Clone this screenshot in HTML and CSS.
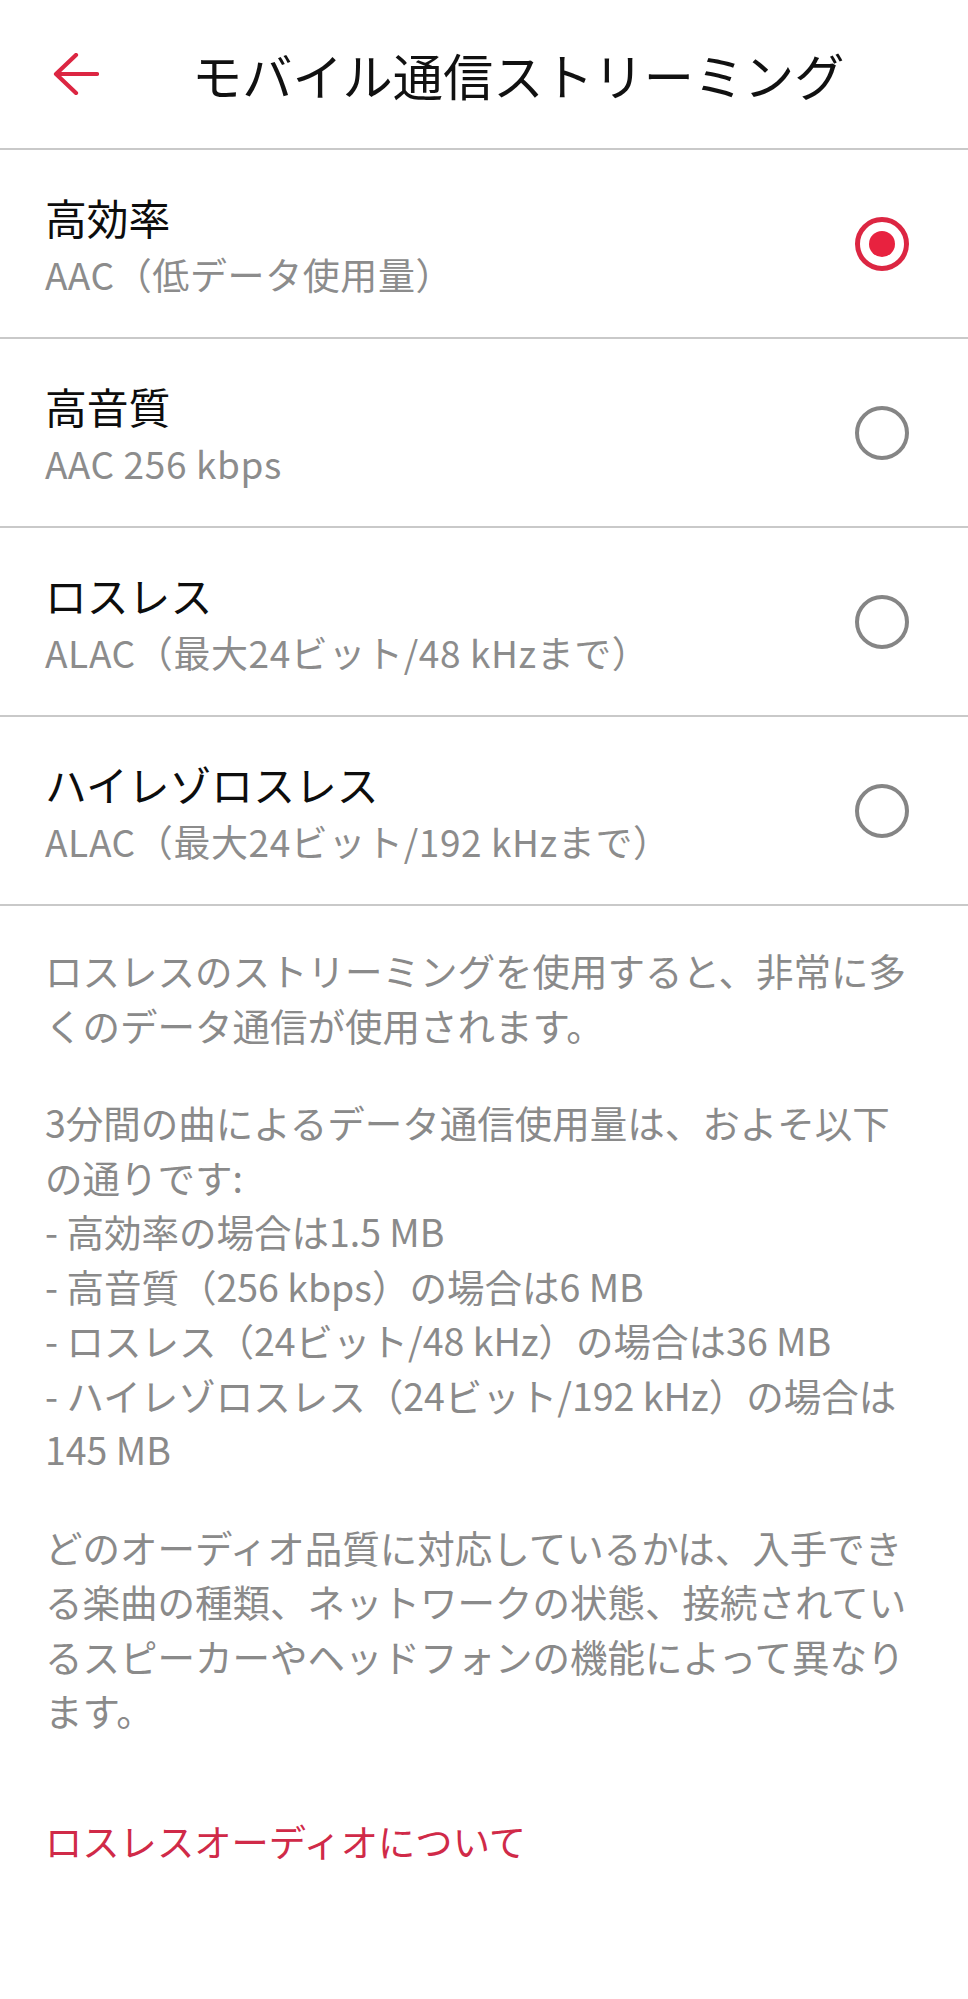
FILE: index.html
```html
<!DOCTYPE html>
<html lang="ja">
<head>
<meta charset="utf-8">
<title>モバイル通信ストリーミング</title>
<link rel="stylesheet" href="styles.css">
</head>
<body>
<header class="nav">
  <svg class="back" width="46" height="42" viewBox="0 0 46 42" aria-hidden="true">
    <path d="M44 21 H4 M23 2 L3 21 L23 40" fill="none" stroke="#dc2642" stroke-width="4.2" stroke-linecap="round" stroke-linejoin="round"/>
  </svg>
  <h1 class="nav-title">モバイル通信ストリーミング</h1>
</header>

<ul class="options">
  <li class="option">
    <div class="option-text">
      <div class="option-title">高効率</div>
      <div class="option-sub">AAC（低データ使用量）</div>
    </div>
    <span class="radio radio-on"></span>
  </li>
  <li class="option">
    <div class="option-text">
      <div class="option-title">高音質</div>
      <div class="option-sub">AAC 256 kbps</div>
    </div>
    <span class="radio"></span>
  </li>
  <li class="option">
    <div class="option-text">
      <div class="option-title">ロスレス</div>
      <div class="option-sub">ALAC（最大24ビット/48 kHzまで）</div>
    </div>
    <span class="radio"></span>
  </li>
  <li class="option">
    <div class="option-text">
      <div class="option-title">ハイレゾロスレス</div>
      <div class="option-sub">ALAC（最大24ビット/192 kHzまで）</div>
    </div>
    <span class="radio"></span>
  </li>
</ul>

<section class="notes">
  <p class="note">ロスレスのストリーミングを使用すると、非常に多<br>くのデータ通信が使用されます。</p>
  <p class="note">3分間の曲によるデータ通信使用量は、およそ以下<br>の通りです:<br>- 高効率の場合は1.5 MB<br>- 高音質（256 kbps）の場合は6 MB<br>- ロスレス（24ビット/48 kHz）の場合は36 MB<br>- ハイレゾロスレス（24ビット/192 kHz）の場合は<br>145 MB</p>
  <p class="note">どのオーディオ品質に対応しているかは、入手でき<br>る楽曲の種類、ネットワークの状態、接続されてい<br>るスピーカーやヘッドフォンの機能によって異なり<br>ます。</p>
  <a class="link" href="#">ロスレスオーディオについて</a>
</section>
</body>
</html>
```

FILE: styles.css
```css
html, body {
  margin: 0;
  padding: 0;
  background: #ffffff;
}

body {
  width: 968px;
  min-height: 1999px;
  font-family: "Noto Sans CJK JP", "Noto Sans", sans-serif;
  color: #111111;
}

.nav {
  height: 148px;
  display: flex;
  align-items: center;
  padding-left: 53px;
  border-bottom: 2px solid #c9c9c9;
}

.back {
  flex: none;
  display: block;
}

.nav-title {
  margin: 0 0 0 93px;
  font-size: 50.2px;
  font-weight: 400;
  line-height: 74px;
  color: #111111;
  letter-spacing: 0;
}

.options {
  list-style: none;
  margin: 0;
  padding: 0;
}

.option {
  height: 187px;
  box-sizing: content-box;
  display: flex;
  align-items: center;
  justify-content: space-between;
  padding: 0 59px 0 45px;
  border-bottom: 2px solid #c9c9c9;
}

.option-text {
  display: flex;
  flex-direction: column;
  padding-top: 4px;
}

.option-title {
  font-size: 41.8px;
  line-height: 58px;
  color: #0d0d0d;
}

.option-sub {
  font-size: 37px;
  line-height: 57px;
  letter-spacing: 0.6px;
  color: #8c8c8c;
}

.radio {
  flex: none;
  width: 54px;
  height: 54px;
  box-sizing: border-box;
  border: 4.5px solid #858585;
  border-radius: 50%;
  display: flex;
  align-items: center;
  justify-content: center;
}

.radio-on {
  border: 5px solid #dc2642;
}

.radio-on::after {
  content: "";
  width: 26px;
  height: 26px;
  border-radius: 50%;
  background: #e8223f;
}

.notes {
  padding: 37px 45px 0 45px;
  font-size: 37.5px;
  line-height: 54.5px;
  color: #8a8a8a;
  white-space: nowrap;
}

.note {
  margin: 0 0 43px 0;
}

.link {
  display: block;
  margin-top: 76px;
  color: #d02a48;
  text-decoration: none;
  font-size: 37.3px;
  line-height: 54px;
}
```
